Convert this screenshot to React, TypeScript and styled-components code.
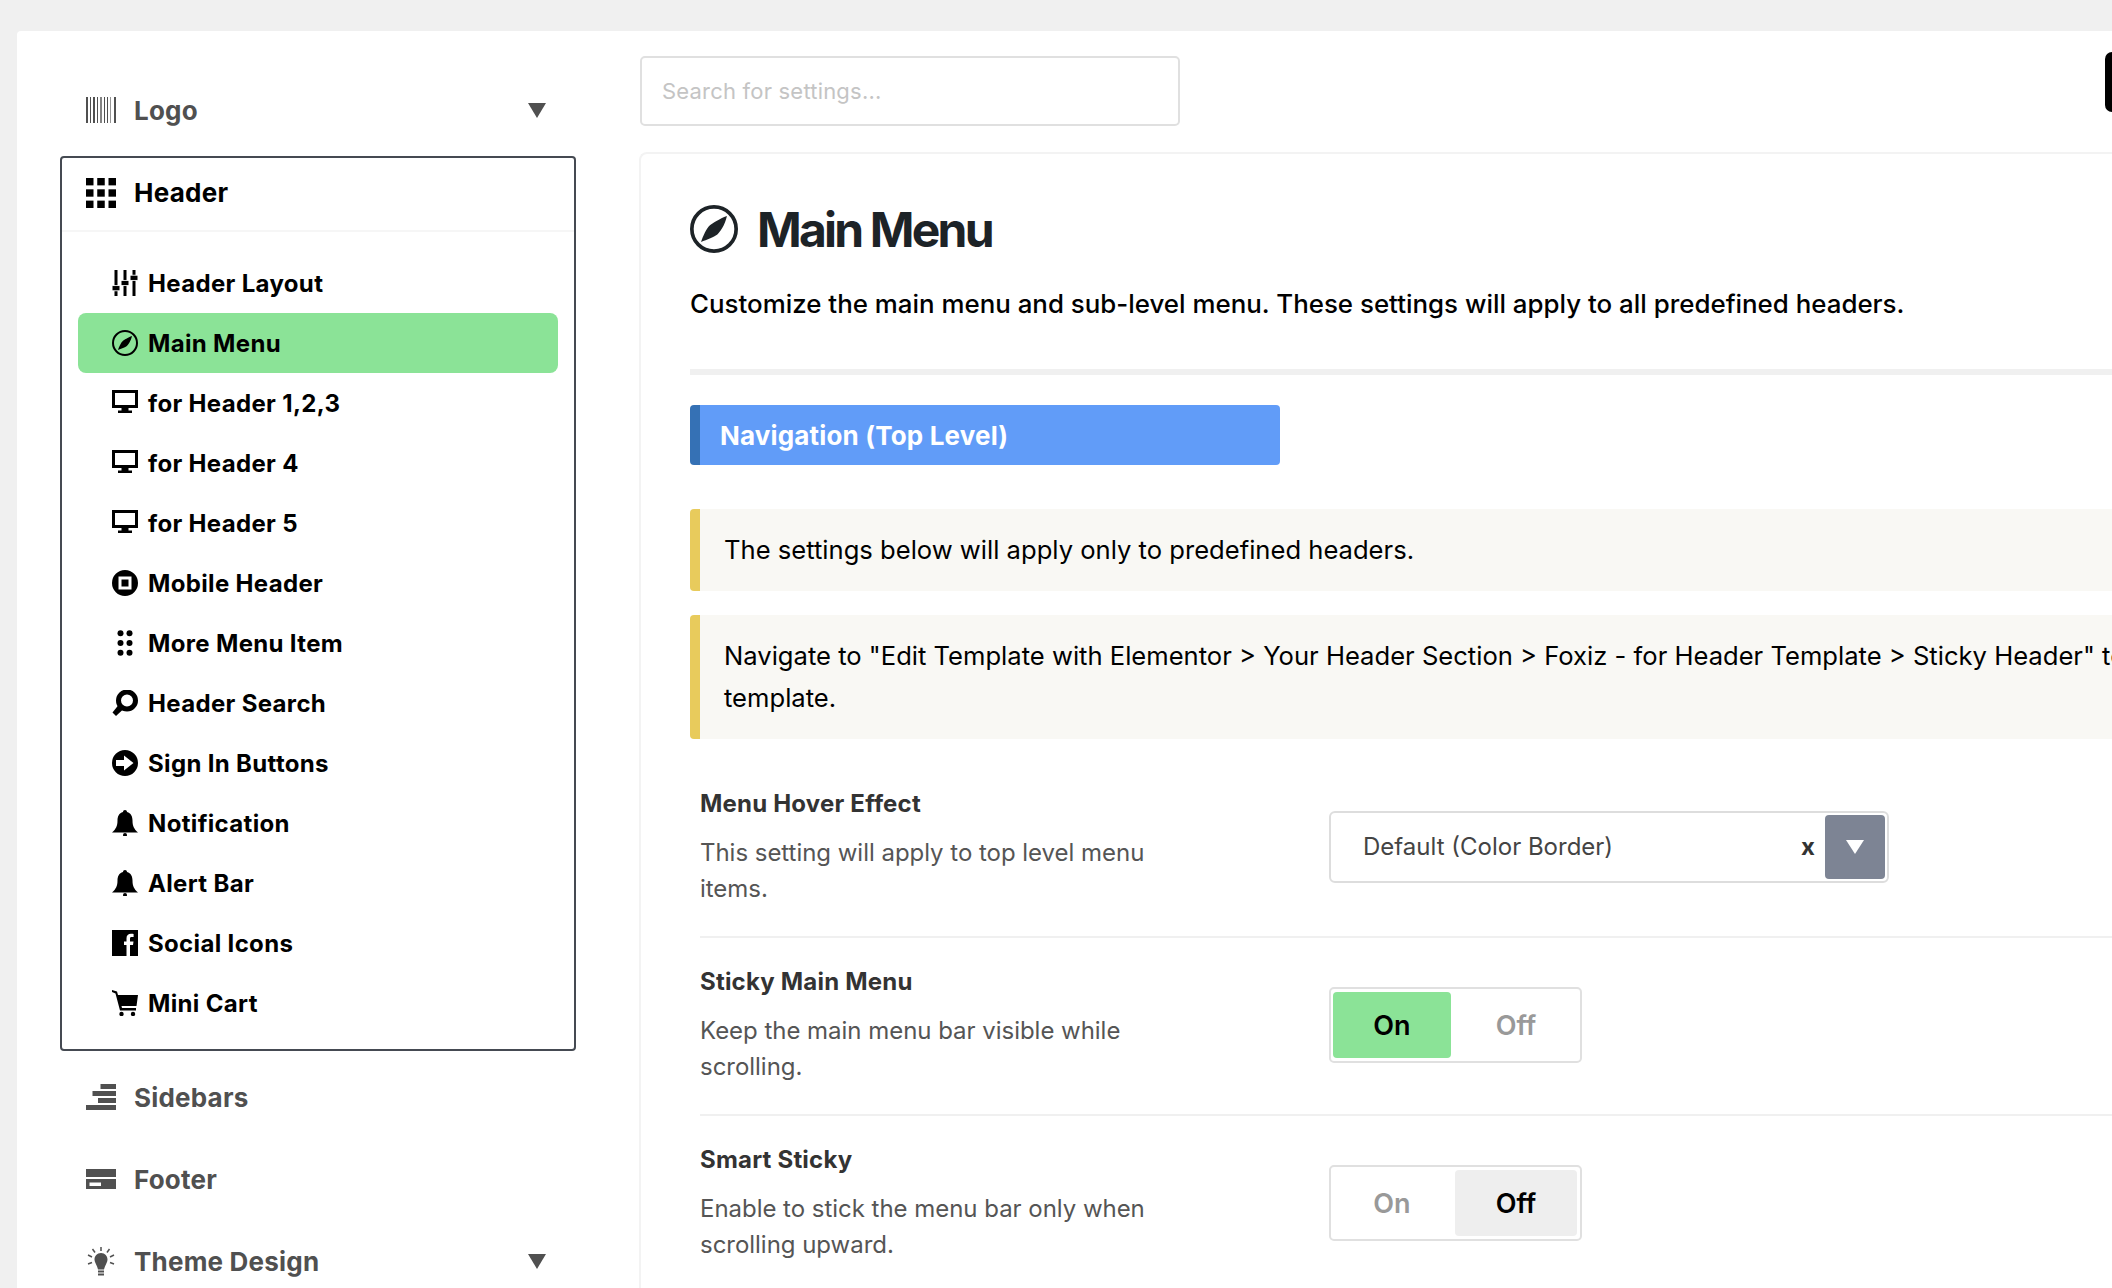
import React from 'react'
import styled, { createGlobalStyle } from 'styled-components'

const GlobalStyle = createGlobalStyle`
  html, body {
    margin: 0;
    height: 100%;
    overflow: hidden;
    background: #f0f0f0;
  }
  body {
    font-family: Inter, "Liberation Sans", sans-serif;
  }
  * {
    box-sizing: border-box;
  }
`

const Page = styled.div`
  height: 1288px;
  padding: 31px 0 0 17px;
  overflow: hidden;
`

const Panel = styled.div`
  display: flex;
  height: 1400px;
  background: #fff;
  border-radius: 4px 0 0 0;
  padding-left: 43px;
`

const Sidebar = styled.nav`
  flex: 0 0 516px;
  padding-top: 38px;
`

const Section = styled.div`
  display: flex;
  align-items: center;
  height: 82px;
  padding: 0 30px 0 26px;
  color: #505050;
  font-size: 26px;
  font-weight: 700;
  letter-spacing: 0.2px;
  gap: 18px;
`

const SectionLabel = styled.span`
  flex: 1;
`

const Caret = styled.span`
  width: 0;
  height: 0;
  border-left: 9px solid transparent;
  border-right: 9px solid transparent;
  border-top: 15px solid #505050;
`

const ActiveBox = styled.div`
  margin-top: 5px;
  border: 2px solid #454a52;
  border-radius: 4px;
  height: 895px;
  margin-bottom: 5px;
`

const ActiveHead = styled.div`
  display: flex;
  align-items: center;
  gap: 18px;
  height: 74px;
  padding: 0 24px 3px;
  color: #000;
  font-size: 26px;
  font-weight: 700;
  letter-spacing: 0.25px;
  border-bottom: 2px solid #f6f6f6;
`

const ItemList = styled.ul`
  list-style: none;
  margin: 0;
  padding: 21px 16px 0;
`

const Item = styled.li<{ $active?: boolean }>`
  display: flex;
  align-items: center;
  gap: 10px;
  height: 60px;
  padding-left: 34px;
  border-radius: 8px;
  color: #000;
  font-size: 24px;
  font-weight: 700;
  letter-spacing: 0.34px;
  background: ${({ $active }) => ($active ? '#8be397' : 'transparent')};
`

const Main = styled.main`
  flex: 1;
  min-width: 0;
  padding-left: 63px;
`

const TopBar = styled.div`
  display: flex;
  align-items: flex-start;
  justify-content: space-between;
  height: 121px;
  padding-top: 25px;
`

const Search = styled.input`
  width: 540px;
  height: 70px;
  margin-left: 1px;
  padding: 0 20px;
  border: 2px solid #e0e0e0;
  border-radius: 5px;
  background: #fff;
  font-family: inherit;
  font-size: 22px;
  letter-spacing: 0.2px;
  &::placeholder {
    color: #c4c4c4;
  }
`

const SaveButton = styled.div`
  width: 7px;
  height: 60px;
  margin-top: -4px;
  background: #000;
  border-radius: 8px 0 0 8px;
`

const Card = styled.section`
  min-height: 1200px;
  border: 2px solid #f3f3f3;
  border-right: 0;
  border-bottom: 0;
  border-radius: 8px 0 0 0;
  padding: 49px 0 0 49px;
`

const TitleRow = styled.div`
  display: flex;
  align-items: center;
  gap: 19px;
  height: 52px;
`

const Title = styled.h1`
  margin: 0;
  color: #1d2327;
  font-size: 48px;
  font-weight: 700;
  letter-spacing: -2.8px;
`

const Lead = styled.p`
  margin: 28px 0 0;
  color: #000;
  font-size: 25.88px;
  font-weight: 500;
  line-height: 42px;
  white-space: nowrap;
`

const Divider = styled.div`
  height: 6px;
  margin-top: 44px;
  background: #f0f0f0;
`

const SectionBanner = styled.div`
  display: flex;
  align-items: center;
  width: 590px;
  height: 60px;
  margin-top: 30px;
  padding-left: 20px;
  background: #619cf8;
  border-left: 10px solid #3571b5;
  border-radius: 4px;
  color: #fff;
  font-size: 26px;
  font-weight: 700;
  letter-spacing: 0.16px;
`

const Notice = styled.div<{ $first?: boolean }>`
  margin-top: ${({ $first }) => ($first ? '44px' : '24px')};
  padding: 20px 0 20px 24px;
  background: #f9f8f4;
  border-left: 10px solid #e8cb5c;
  border-radius: 4px 0 0 4px;
  color: #000;
  font-size: 25.6px;
  line-height: 42px;
  width: 1780px;
`

const Rows = styled.div`
  margin: 49px 0 0 10px;
`

const Row = styled.div<{ $last?: boolean }>`
  display: grid;
  grid-template-columns: 629px 1fr;
  padding-bottom: ${({ $last }) => ($last ? '0' : '29px')};
  margin-bottom: ${({ $last }) => ($last ? '0' : '28.5px')};
  border-bottom: ${({ $last }) => ($last ? 'none' : '2px solid #f0f0f0')};
`

const RowText = styled.div`
  width: 480px;
`

const Label = styled.div`
  color: #333;
  font-size: 24px;
  font-weight: 700;
  letter-spacing: 0.2px;
  line-height: 32px;
`

const Hint = styled.div`
  margin-top: 14.5px;
  color: #555;
  font-size: 24px;
  letter-spacing: -0.03px;
  line-height: 36px;
`

const Select = styled.div`
  display: flex;
  align-items: center;
  width: 560px;
  height: 72px;
  margin-top: 23px;
  padding: 0 2px 0 32px;
  border: 2px solid #ddd;
  border-radius: 6px;
  color: #444;
  font-size: 24px;
`

const SelectValue = styled.span`
  flex: 1;
  padding-bottom: 2px;
`

const Clear = styled.span`
  margin-right: 10px;
  padding-bottom: 2px;
  font-weight: 700;
  color: #333;
`

const SelectArrow = styled.span`
  display: flex;
  align-items: center;
  justify-content: center;
  width: 60px;
  height: 64px;
  background: #7d8494;
  border-radius: 4px;
  &::after {
    content: '';
    border-left: 9px solid transparent;
    border-right: 9px solid transparent;
    border-top: 14px solid #fff;
  }
`

const Toggle = styled.div`
  display: grid;
  grid-template-columns: 118px 122px;
  gap: 4px;
  width: 253px;
  height: 76px;
  margin-top: 21px;
  padding: 3px 3px 3px 2px;
  border: 2px solid #e0e0e0;
  border-radius: 5px;
`

const ToggleOption = styled.div<{ $on?: boolean; $color?: string }>`
  display: flex;
  align-items: center;
  justify-content: center;
  border-radius: 4px;
  font-size: 27px;
  font-weight: 600;
  color: ${({ $on }) => ($on ? '#000' : '#999')};
  background: ${({ $on, $color }) => ($on ? $color : 'transparent')};
`

const IconSvg = styled.svg<{ $w?: number; $h?: number }>`
  flex: none;
  display: block;
  width: ${({ $w }) => $w ?? 26}px;
  height: ${({ $h }) => $h ?? 26}px;
`

const icons: Record<string, React.ReactNode> = {
  barcode: (
    <g fill="currentColor">
      <rect x="0" y="0" width="2" height="30" />
      <rect x="4" y="0" width="1" height="30" />
      <rect x="7" y="0" width="2" height="30" />
      <rect x="11" y="0" width="1" height="30" />
      <rect x="14" y="0" width="2" height="30" opacity=".7" />
      <rect x="18" y="0" width="1" height="30" />
      <rect x="21" y="0" width="1" height="30" />
      <rect x="24" y="0" width="1" height="30" opacity=".6" />
      <rect x="28" y="0" width="2" height="30" />
    </g>
  ),
  sliders: (
    <g fill="currentColor">
      <rect x="2.5" y="0" width="3" height="30" />
      <rect x="11.5" y="0" width="3" height="30" />
      <rect x="20.5" y="0" width="3" height="30" />
      <rect x="0" y="18" width="8" height="6" stroke="#fff" strokeWidth="1" />
      <rect x="9" y="12" width="8" height="6" stroke="#fff" strokeWidth="1" />
      <rect x="18" y="6" width="8" height="6" stroke="#fff" strokeWidth="1" />
    </g>
  ),
  compass: (
    <g>
      <circle cx="13" cy="13" r="12" fill="none" stroke="currentColor" strokeWidth="2" />
      <path d="M20 6 C19 11 16 15 14.8 16 C13.5 17 9 19 6 20 C7 17 9 12.5 10.8 11 C12 10 16 7.5 20 6Z" fill="currentColor" />
    </g>
  ),
  monitor: (
    <path
      fillRule="evenodd"
      fill="currentColor"
      d="M0 0H26V18H16.5V20.5H20V23H6V20.5H9.5V18H0ZM3 3V15H23V3Z"
    />
  ),
  home: (
    <path
      fillRule="evenodd"
      fill="currentColor"
      d="M13 0A13 13 0 1 1 13 26A13 13 0 1 1 13 0ZM6.5 6.5V19.5H19.5V6.5ZM9.5 9.5H16.5V16.5H9.5Z"
    />
  ),
  dots: (
    <g fill="currentColor">
      <circle cx="8.5" cy="3.2" r="3" />
      <circle cx="17.5" cy="3.2" r="3" />
      <circle cx="8.5" cy="13" r="3" />
      <circle cx="17.5" cy="13" r="3" />
      <circle cx="8.5" cy="22.8" r="3" />
      <circle cx="17.5" cy="22.8" r="3" />
    </g>
  ),
  search: (
    <g>
      <circle cx="15" cy="10.5" r="8.5" fill="none" stroke="currentColor" strokeWidth="5" />
      <path d="M6.5 15L11 19.5L4 26L0.5 22.5Z" fill="currentColor" />
    </g>
  ),
  arrow: (
    <path
      fillRule="evenodd"
      fill="currentColor"
      d="M13 0A13 13 0 1 1 13 26A13 13 0 1 1 13 0ZM4 10V16H12V20.5L21.5 13L12 5.5V10Z"
    />
  ),
  bell: (
    <g fill="currentColor">
      <path d="M13 0C14.2 0 15 .8 15 2C19 3 20.5 6.5 20.5 10.5C20.5 16 22 19 26 22.5H0C4 19 5.5 16 5.5 10.5C5.5 6.5 7 3 11 2C11 .8 11.8 0 13 0Z" />
      <circle cx="13" cy="25" r="2" />
    </g>
  ),
  facebook: (
    <path
      fillRule="evenodd"
      fill="currentColor"
      d="M0 0H26V26H0ZM14.5 26H18V15H21L21.5 11.5H18V8.8C18 7.6 18.4 7 19.6 7H21.6V4C21.1 3.9 20.2 3.8 19 3.8C16.2 3.8 14.5 5.4 14.5 8.3V11.5H12V15H14.5Z"
    />
  ),
  cart: (
    <g fill="currentColor">
      <path d="M0 0L5 1.5L6 5H26L24.5 16H9.5L10 18H24V20.5H8L3.5 3.5L0 2Z" />
      <circle cx="9.5" cy="24" r="2.2" />
      <circle cx="21" cy="24" r="2.2" />
    </g>
  ),
  grid: (
    <g fill="currentColor">
      <rect x="0" y="0" width="7.5" height="7.5" />
      <rect x="11.25" y="0" width="7.5" height="7.5" />
      <rect x="22.5" y="0" width="7.5" height="7.5" />
      <rect x="0" y="11.5" width="7.5" height="7.5" />
      <rect x="11.25" y="11.5" width="7.5" height="7.5" />
      <rect x="22.5" y="11.5" width="7.5" height="7.5" />
      <rect x="0" y="23" width="7.5" height="7.5" />
      <rect x="11.25" y="23" width="7.5" height="7.5" />
      <rect x="22.5" y="23" width="7.5" height="7.5" />
    </g>
  ),
  sidebars: (
    <g fill="currentColor">
      <rect x="14.5" y="0" width="15.5" height="5" />
      <rect x="6.5" y="7" width="23.5" height="5" />
      <rect x="12" y="14" width="18" height="5" />
      <rect x="0" y="21" width="30" height="5" />
    </g>
  ),
  footer: (
    <path
      fillRule="evenodd"
      fill="currentColor"
      d="M0 0H30V8H0ZM0 10H30V20H0ZM3.5 13.5V17H15V13.5Z"
    />
  ),
  bulb: (
    <g fill="currentColor">
      <path d="M15 6C19 6 21.5 9 21.5 12.5C21.5 15.5 19 18 18 22.5H12C11 18 8.5 15.5 8.5 12.5C8.5 9 11 6 15 6Z" />
      <rect x="12" y="23.5" width="6" height="2" />
      <rect x="12" y="26.5" width="6" height="2" />
      <g stroke="currentColor" strokeWidth="1.5">
        <line x1="15" y1="0" x2="15" y2="4" />
        <line x1="6.5" y1="2" x2="9" y2="5.5" />
        <line x1="23.5" y1="2" x2="21" y2="5.5" />
        <line x1="2" y1="8" x2="6" y2="10" />
        <line x1="28" y1="8" x2="24" y2="10" />
        <line x1="2" y1="17" x2="6" y2="15.5" />
        <line x1="28" y1="17" x2="24" y2="15.5" />
      </g>
    </g>
  ),
}

const Icon = ({ name, w = 26, h = 26, vh }: { name: string; w?: number; h?: number; vh?: number }) => (
  <IconSvg $w={w} $h={h} viewBox={`0 0 ${w} ${vh ?? h}`} preserveAspectRatio="none">
    {icons[name]}
  </IconSvg>
)

const menu = [
  { icon: 'sliders', label: 'Header Layout', vh: 30 },
  { icon: 'compass', label: 'Main Menu', active: true },
  { icon: 'monitor', label: 'for Header 1,2,3' },
  { icon: 'monitor', label: 'for Header 4' },
  { icon: 'monitor', label: 'for Header 5' },
  { icon: 'home', label: 'Mobile Header' },
  { icon: 'dots', label: 'More Menu Item' },
  { icon: 'search', label: 'Header Search' },
  { icon: 'arrow', label: 'Sign In Buttons' },
  { icon: 'bell', label: 'Notification' },
  { icon: 'bell', label: 'Alert Bar' },
  { icon: 'facebook', label: 'Social Icons' },
  { icon: 'cart', label: 'Mini Cart' },
]

const Switch = ({ on }: { on: boolean }) => (
  <Toggle>
    <ToggleOption $on={on} $color="#8be397">
      On
    </ToggleOption>
    <ToggleOption $on={!on} $color="#eeeeee">
      Off
    </ToggleOption>
  </Toggle>
)

export default function App() {
  return (
    <Page>
      <GlobalStyle />
      <Panel>
        <Sidebar>
          <Section>
            <Icon name="barcode" w={30} h={26} vh={30} />
            <SectionLabel>Logo</SectionLabel>
            <Caret />
          </Section>
          <ActiveBox>
            <ActiveHead>
              <Icon name="grid" w={30} h={30} vh={30.5} />
              Header
            </ActiveHead>
            <ItemList>
              {menu.map((m) => (
                <Item key={m.label} $active={m.active}>
                  <Icon name={m.icon} vh={m.vh} />
                  {m.label}
                </Item>
              ))}
            </ItemList>
          </ActiveBox>
          <Section>
            <Icon name="sidebars" w={30} h={26} />
            <SectionLabel>Sidebars</SectionLabel>
          </Section>
          <Section>
            <Icon name="footer" w={30} h={20} />
            <SectionLabel>Footer</SectionLabel>
          </Section>
          <Section>
            <Icon name="bulb" w={30} h={29} />
            <SectionLabel>Theme Design</SectionLabel>
            <Caret />
          </Section>
        </Sidebar>
        <Main>
          <TopBar>
            <Search placeholder="Search for settings..." />
            <SaveButton />
          </TopBar>
          <Card>
            <TitleRow>
              <svg width="48" height="48" viewBox="0 0 26 26" color="#1d2327">
                {icons.compass}
              </svg>
              <Title>Main Menu</Title>
            </TitleRow>
            <Lead>
              Customize the main menu and sub-level menu. These settings will apply to all predefined headers.
            </Lead>
            <Divider />
            <SectionBanner>Navigation (Top Level)</SectionBanner>
            <Notice $first>The settings below will apply only to predefined headers.</Notice>
            <Notice>
              Navigate to "Edit Template with Elementor &gt; Your Header Section &gt; Foxiz - for Header Template &gt;
              Sticky Header" to edit the sticky header template.
            </Notice>
            <Rows>
              <Row>
                <RowText>
                  <Label>Menu Hover Effect</Label>
                  <Hint>This setting will apply to top level menu items.</Hint>
                </RowText>
                <Select>
                  <SelectValue>Default (Color Border)</SelectValue>
                  <Clear>x</Clear>
                  <SelectArrow />
                </Select>
              </Row>
              <Row>
                <RowText>
                  <Label>Sticky Main Menu</Label>
                  <Hint>Keep the main menu bar visible while scrolling.</Hint>
                </RowText>
                <Switch on />
              </Row>
              <Row $last>
                <RowText>
                  <Label>Smart Sticky</Label>
                  <Hint>Enable to stick the menu bar only when scrolling upward.</Hint>
                </RowText>
                <Switch on={false} />
              </Row>
            </Rows>
          </Card>
        </Main>
      </Panel>
    </Page>
  )
}
